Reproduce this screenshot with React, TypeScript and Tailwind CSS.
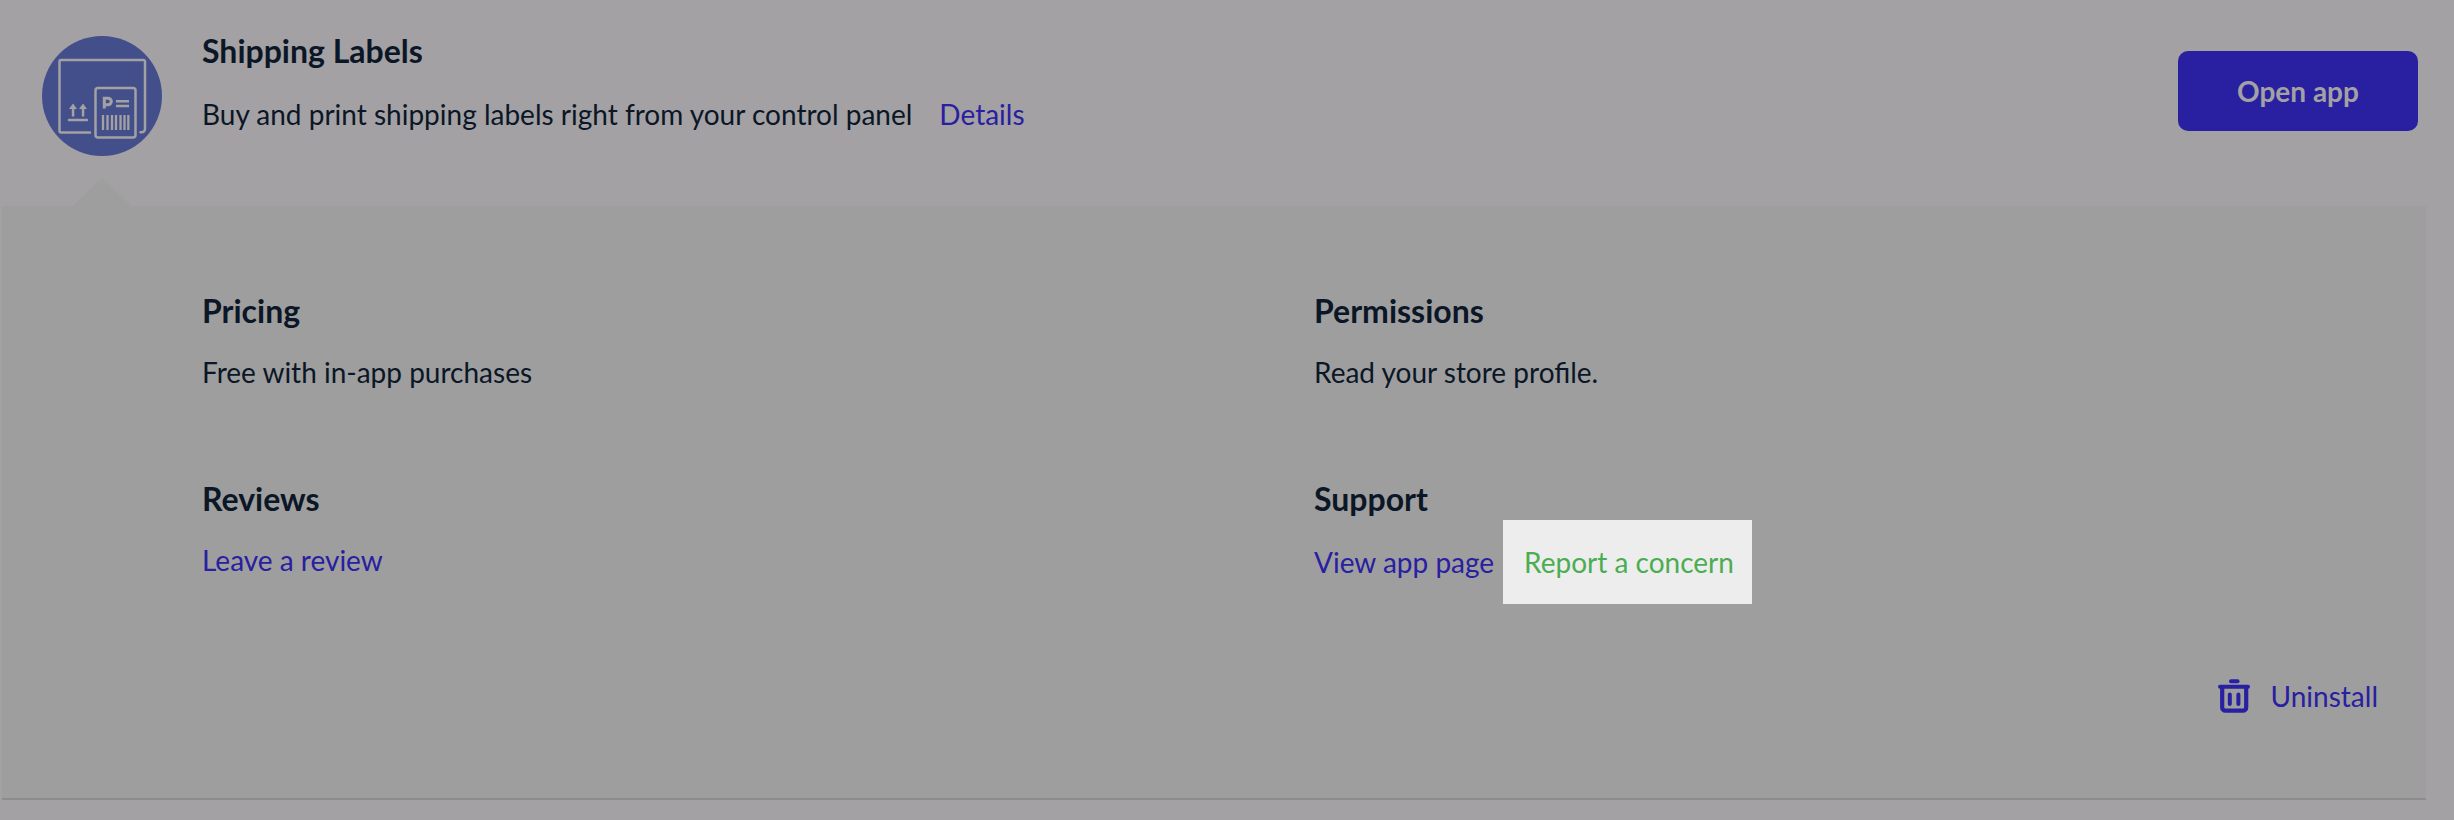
const font = 'font-["Lato","Noto_Sans",sans-serif]';

function ShippingIcon() {
  return (
    <svg viewBox="0 0 120 120" className="w-[120px] h-[120px] shrink-0">
      <circle cx="60" cy="60" r="60" fill="#434f8a" />
      <g fill="none" stroke="#a3a1a3" strokeWidth="2.5" strokeLinecap="round" strokeLinejoin="round">
        <path d="M48 96.500H19a1.500 1.500 0 0 1-1.500-1.500V25.500a1.500 1.500 0 0 1 1.500-1.500h82.500a1.500 1.500 0 0 1 1.500 1.500V93a3.300 3.300 0 0 1-3.300 3.300H98.500" />
        <rect x="53.500" y="52" width="40" height="49.500" rx="2.500" />
        <path d="M27 84H45" />
      </g>
      <path d="M31 67.500l-4 5.500h2.800v7.500h2.500V73h2.700zM41 67.500l-4 5.500h2.800v7.500h2.500V73h2.700z" fill="#a3a1a3" />
      <path d="M62.300 72.500V62.200h3.700a3.300 3.300 0 0 1 0 6.600h-3.700" fill="none" stroke="#a3a1a3" strokeWidth="3" />
      <path d="M74 65.300h13M74 70h13" stroke="#a3a1a3" strokeWidth="2.600" />
      <path d="M61 79v15M65.500 79v15M70 79v15M74 79v15M78.500 79v15M82.500 79v15M86.300 79v15" stroke="#a3a1a3" strokeWidth="2.300" />
    </svg>
  );
}

function TrashIcon() {
  return (
    <svg viewBox="0 0 32 34" className="w-8 h-[34px]" fill="none" stroke="#2820a0" strokeLinecap="round">
      <path d="M2 7.800h28" strokeWidth="4" />
      <path d="M13 2.200h6.500" strokeWidth="4" />
      <path d="M4.200 8v20.500a3.200 3.200 0 0 0 3.200 3.200h17.600a3.200 3.200 0 0 0 3.200-3.200V8" strokeWidth="4.200" />
      <path d="M11.800 15.500v9.500M20.400 15.500v9.500" strokeWidth="4" />
    </svg>
  );
}

function Block({ title, children }: { title: string; children: React.ReactNode }) {
  return (
    <div className="h-[188px]">
      <h3 className="text-[32px] leading-[40px] font-bold text-[#0b1626]">{title}</h3>
      <div className="mt-[21px] text-[28px] leading-[40px] text-[#0b1626]">{children}</div>
    </div>
  );
}

export default function App() {
  return (
    <div className={`${font} relative w-[2454px] h-[820px] bg-[#a3a1a3] overflow-hidden`}>
      <header className="flex h-[206px] pl-[42px] pr-[36px] pt-[36px]">
        <ShippingIcon />
        <div className="ml-[40px] flex-1 -mt-[5px]">
          <h2 className="text-[32px] leading-[40px] font-bold text-[#0b1626]">Shipping Labels</h2>
          <p className="mt-[23px] text-[28px] leading-[40px] text-[#0b1626]">
            Buy and print shipping labels right from your control panel
            <a className="ml-[27px] text-[#2820a0]">Details</a>
          </p>
        </div>
        <button className="mt-[15px] w-[240px] h-[80px] rounded-[10px] bg-[#2820a0] text-[#a3a1a3] text-[28px] font-bold">
          Open app
        </button>
      </header>

      {/* little notch under the app icon */}
      <div className="absolute left-[73px] top-[178px] w-0 h-0 border-x-[29px] border-x-transparent border-b-[28px] border-b-[#9e9e9e]" />

      <section className="ml-[2px] w-[2424px] h-[594px] bg-[#9e9e9e] border-b-2 border-b-[#8c8c8c] pl-[200px] pt-[85px] pr-[48px]">
        <div className="grid grid-cols-[1112px_1fr]">
          <Block title="Pricing">Free with in-app purchases</Block>
          <Block title="Permissions">Read your store profile.</Block>
          <Block title="Reviews">
            <a className="text-[#2820a0]">Leave a review</a>
          </Block>
          <div className="h-[188px]">
            <h3 className="text-[32px] leading-[40px] font-bold text-[#0b1626]">Support</h3>
            <div className="mt-[1px] flex items-center text-[28px] leading-[40px]">
              <a className="text-[#2820a0]">View app page</a>
              <a className="ml-[9px] w-[249px] h-[84px] flex items-center pl-[21px] bg-[#ededed] text-[#4aad52]">
                Report a concern
              </a>
            </div>
          </div>
        </div>
        <div className="flex justify-end items-center gap-[21px] mt-[9px] text-[28px] leading-[40px] text-[#2820a0]">
          <TrashIcon />
          <span>Uninstall</span>
        </div>
      </section>
    </div>
  );
}
